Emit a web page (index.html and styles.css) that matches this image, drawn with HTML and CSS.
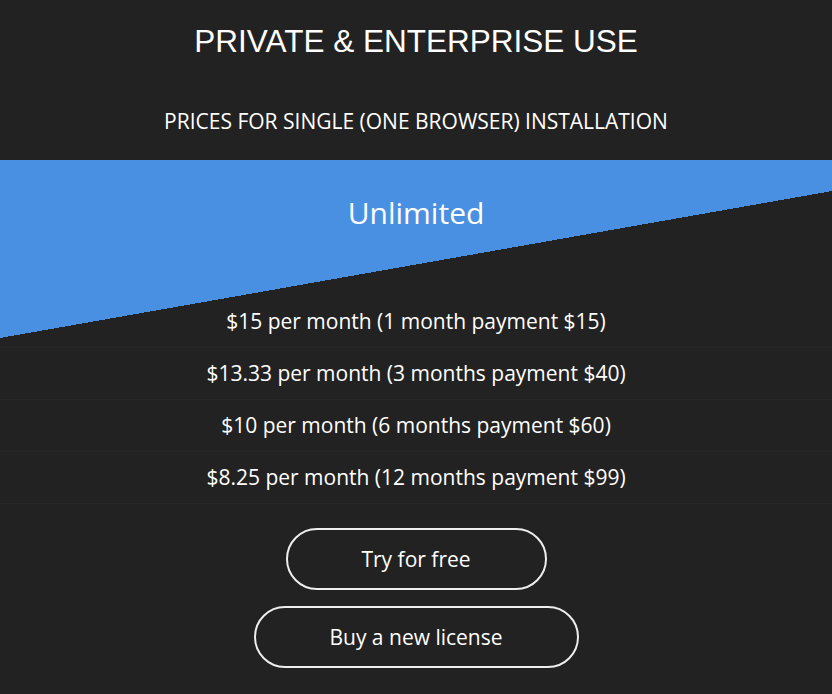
FILE: index.html
```html
<!DOCTYPE html>
<html>
<head>
<meta charset="utf-8">
<link rel="stylesheet" href="styles.css">
</head>
<body>
<div class="page">
  <h1 class="title">PRIVATE &amp; ENTERPRISE USE</h1>
  <h2 class="subtitle">PRICES FOR SINGLE (ONE BROWSER) INSTALLATION</h2>
  <section class="plan">
    <h3 class="plan-name">Unlimited</h3>
    <ul class="prices">
      <li class="price">$15 per month (1 month payment $15)</li>
      <li class="price">$13.33 per month (3 months payment $40)</li>
      <li class="price">$10 per month (6 months payment $60)</li>
      <li class="price">$8.25 per month (12 months payment $99)</li>
    </ul>
    <div class="actions">
      <a class="btn btn-try" href="#">Try for free</a>
      <a class="btn btn-buy" href="#">Buy a new license</a>
    </div>
  </section>
</div>
</body>
</html>
```
FILE: styles.css
```css
html, body {
  margin: 0;
  padding: 0;
  background: #222222;
  color: #ffffff;
}
.page {
  width: 832px;
  height: 694px;
  overflow: hidden;
  background: #222222;
}
.title {
  margin: 0;
  padding-top: 23px;
  font-family: "Liberation Sans", Arial, sans-serif;
  font-weight: 400;
  font-size: 31.5px;
  line-height: 36px;
  text-align: center;
}
.subtitle {
  margin: 49px 0 0;
  padding-bottom: 26px;
  font-family: "Open Sans", sans-serif;
  font-weight: 400;
  font-size: 21px;
  line-height: 26px;
  text-align: center;
}
.plan {
  font-family: "Open Sans", sans-serif;
  padding-top: 33px;
  background:
    linear-gradient(#4a90e2, #4a90e2) 0 0 / 100% 31px no-repeat,
    linear-gradient(to bottom right, #4a90e2 50%, transparent 50%) 0 31px / 100% 147px no-repeat;
}
.plan-name {
  margin: 0;
  font-weight: 400;
  font-size: 30px;
  line-height: 40px;
  text-align: center;
}
.prices {
  list-style: none;
  margin: 63px 0 0;
  padding: 0;
}
.price {
  height: 51px;
  line-height: 51px;
  border-bottom: 1px solid #292929;
  font-size: 21px;
  text-align: center;
}
.actions {
  display: flex;
  flex-direction: column;
  align-items: center;
  gap: 16px;
  padding-top: 24px;
}
.btn {
  display: flex;
  align-items: center;
  justify-content: center;
  box-sizing: border-box;
  height: 62px;
  border: 2px solid #eeeeee;
  border-radius: 31px;
  color: #ffffff;
  text-decoration: none;
  font-size: 21px;
}
.btn-try { width: 261px; }
.btn-buy { width: 325px; }
```
